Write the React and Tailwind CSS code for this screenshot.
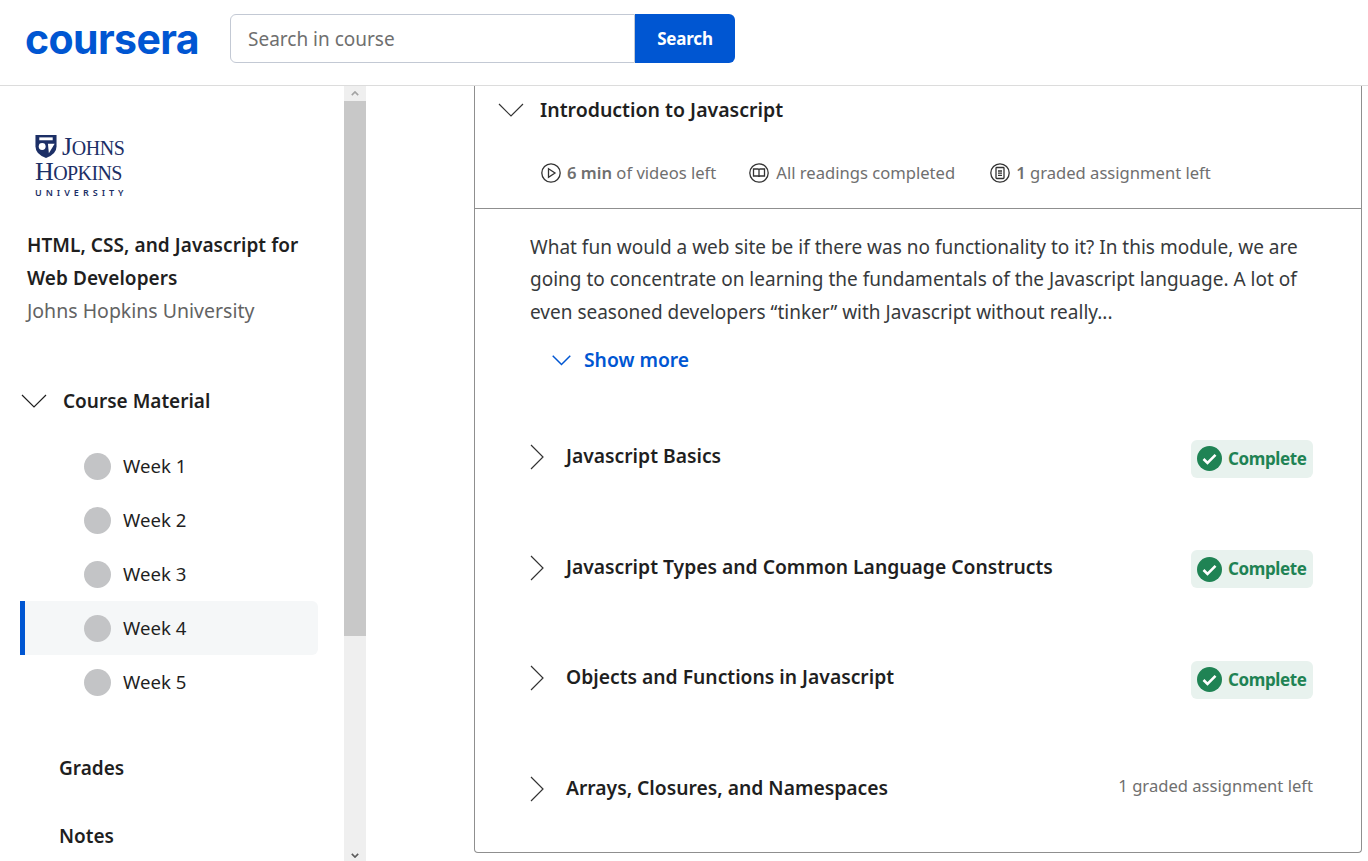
import React from 'react';

const font = { fontFamily: '"Noto Sans", sans-serif' };

const Chevron = ({ dir = 'down', className = '' }) => {
  const points = dir === 'down' ? '1,1 13,13 25,1' : '1,1 13,13 1,25';
  const box = dir === 'down' ? '0 0 26 15' : '0 0 15 26';
  return (
    <svg viewBox={box} className={className} fill="none" stroke="currentColor" strokeWidth="1.2">
      <polyline points={points} />
    </svg>
  );
};

const PlayIcon = () => (
  <svg viewBox="0 0 20 20" className="w-5 h-5 shrink-0" fill="none" stroke="#333" strokeWidth="1.3">
    <circle cx="10" cy="10" r="9.2" />
    <path d="M7.5 5.8 L14 10 L7.5 14.2 Z" />
  </svg>
);

const BookIcon = () => (
  <svg viewBox="0 0 20 20" className="w-5 h-5 shrink-0" fill="none" stroke="#333" strokeWidth="1.3">
    <circle cx="10" cy="10" r="9.2" />
    <path d="M4.5 6 H9 Q10 6 10 7 V14 Q10 13 9 13 H4.5 Z M15.5 6 H11 Q10 6 10 7 V14 Q10 13 11 13 H15.5 Z" />
  </svg>
);

const DocIcon = () => (
  <svg viewBox="0 0 20 20" className="w-5 h-5 shrink-0" fill="none" stroke="#333" strokeWidth="1.3">
    <circle cx="10" cy="10" r="9.2" />
    <rect x="6" y="4.5" width="8" height="11" rx="0.8" />
    <path d="M8 8 H12 M8 10.2 H12 M8 12.4 H12" />
  </svg>
);

const CheckBadge = () => (
  <div className="w-[122px] h-[38px] rounded-md bg-[#e8f2ee] flex items-center pl-[6px] gap-[6px]">
    <svg viewBox="0 0 25 25" className="w-[25px] h-[25px] shrink-0">
      <circle cx="12.5" cy="12.5" r="12.5" fill="#1f8354" />
      <path d="M6.5 13 L10.5 17 L18.5 8.8" fill="none" stroke="#fff" strokeWidth="2.6" />
    </svg>
    <span className="text-[17px] font-bold text-[#1f8354] tracking-[-0.4px]">Complete</span>
  </div>
);

const lessons = [
  { title: 'Javascript Basics', done: true },
  { title: 'Javascript Types and Common Language Constructs', done: true },
  { title: 'Objects and Functions in Javascript', done: true },
  { title: 'Arrays, Closures, and Namespaces', done: false },
];

const weeks = ['Week 1', 'Week 2', 'Week 3', 'Week 4', 'Week 5'];

const Sidebar = () => (
  <aside className="w-[344px] shrink-0 overflow-hidden">
    {/* JHU logo */}
    <div className="pl-[35px] pt-[48px] h-[140px]">
      <div className="w-[92px] text-[#1c2f66]" style={{ fontFamily: '"Liberation Serif", serif' }}>
        <div className="flex items-start h-[24px]">
          <svg viewBox="0 0 22 24" className="w-[22px] h-[23px] shrink-0 mt-[1px]">
            <path d="M0 0 H22 V12 Q22 20 11 24 Q0 20 0 12 Z" fill="#1c2f66" />
            <rect x="4" y="2.5" width="14" height="3" fill="#fff" />
            <circle cx="7" cy="12" r="3.6" fill="#fff" />
            <path d="M13 9 L20 9 L14 19 Z" fill="#fff" />
          </svg>
          <span className="text-[26px] leading-[26px] ml-[5px] tracking-[-0.4px] whitespace-nowrap">J<span className="text-[20px]">OHNS</span></span>
        </div>
        <div className="text-[26px] leading-[26px] mt-[1px] tracking-[-0.6px] whitespace-nowrap">H<span className="text-[20px]">OPKINS</span></div>
        <div className="text-[9px] leading-[10px] mt-[2px] font-semibold tracking-[4px] whitespace-nowrap" style={font}>UNIVERSITY</div>
      </div>
    </div>

    <div className="pl-[27px] text-[19px] leading-[32.5px] h-[161px] pt-[3px]">
      <div className="font-semibold text-[#1f1f1f] tracking-[0.07px]">HTML, CSS, and Javascript for</div>
      <div className="font-semibold text-[#1f1f1f] tracking-[0.07px]">Web Developers</div>
      <div className="text-[#636363] text-[19.5px] pt-[1px]">Johns Hopkins University</div>
    </div>

    {/* Course Material */}
    <div className="flex items-center h-[28px] pl-[21px] text-[#1f1f1f]">
      <Chevron className="w-[26px] h-[15px]" />
      <span className="ml-[16px] text-[19px] font-semibold">Course Material</span>
    </div>
    <div className="mt-[24px] w-[298px] ml-[20px]">
      {weeks.map((w) => (
        <div
          key={w}
          className={`h-[54px] flex items-center rounded-r-md border-l-[5px] ${w === 'Week 4' ? 'border-[#0056d2] bg-[#f5f7f8]' : 'border-transparent'}`}
        >
          <span className="w-[27px] h-[27px] rounded-full bg-[#c3c4c6] ml-[59px]" />
          <span className="ml-[12px] text-[18.6px] text-[#1f1f1f]">{w}</span>
        </div>
      ))}
    </div>
    <div className="pl-[59px] mt-[46px] text-[19px] font-semibold text-[#1f1f1f] leading-[26px]">Grades</div>
    <div className="pl-[59px] mt-[42px] text-[19px] font-semibold text-[#1f1f1f] leading-[26px]">Notes</div>
  </aside>
);

const Scrollbar = () => (
  <div className="w-[22px] shrink-0 bg-[#efefef] flex flex-col items-center">
    <div className="h-[15px] flex items-center">
      <svg viewBox="0 0 10 6" className="w-[8px] h-[5px]" fill="none" stroke="#a3a3a3" strokeWidth="2"><path d="M1 5 L5 1 L9 5" /></svg>
    </div>
    <div className="w-full h-[535px] bg-[#c8c8c8]" />
    <div className="mt-auto h-[10px] flex items-center mb-[1px]">
      <svg viewBox="0 0 10 6" className="w-[8px] h-[5px]" fill="none" stroke="#5c5c5c" strokeWidth="2"><path d="M1 1 L5 5 L9 1" /></svg>
    </div>
  </div>
);

const Main = () => (
  <main className="flex-1 min-w-0 overflow-hidden pl-[108px] pr-[6px]">
    <div className="h-[767px] border-x border-b border-[#8f8f8f] rounded-b-sm">
      {/* Module header */}
      <div className="h-[123px] border-b border-[#8f8f8f]">
        <div className="flex items-center pl-[23px] h-[48px]">
          <Chevron className="w-[26px] h-[15px] text-[#333]" />
          <span className="ml-[16px] text-[19.5px] font-semibold text-[#1f1f1f]">Introduction to Javascript</span>
        </div>
        <div className="flex items-center pl-[66px] mt-[27px] text-[16.6px] text-[#6f6f6f] h-[24px]">
          <PlayIcon />
          <span className="ml-[6px]"><b className="font-semibold">6 min</b> of videos left</span>
          <span className="ml-[33px]"><BookIcon /></span>
          <span className="ml-[7px]">All readings completed</span>
          <span className="ml-[35px]"><DocIcon /></span>
          <span className="ml-[6px]"><b className="font-semibold">1</b> graded assignment left</span>
        </div>
      </div>

      {/* Description */}
      <div className="pl-[55px] pt-[21.5px] text-[19px] leading-[32.5px] text-[#373a3c] whitespace-nowrap">
        <div>What fun would a web site be if there was no functionality to it? In this module, we are</div>
        <div>going to concentrate on learning the fundamentals of the Javascript language. A lot of</div>
        <div>even seasoned developers “tinker” with Javascript without really...</div>
      </div>
      <div className="flex items-center pl-[77px] mt-[16px] h-[32px] text-[#0056d2]">
        <Chevron className="w-[19px] h-[11px] stroke-[2px]" />
        <span className="ml-[13px] text-[19.3px] font-semibold">Show more</span>
      </div>

      {/* Lessons */}
      <div className="mt-[67.5px] pl-[55px] pr-[48px]">
        {lessons.map((l) => (
          <div key={l.title} className="h-[110.5px] flex items-start justify-between">
            <div className="flex items-center h-[26px]">
              <Chevron dir="right" className="w-[15px] h-[26px] text-[#333] shrink-0 mt-[1px]" />
              <span className="ml-[21px] text-[19.3px] font-semibold text-[#1f1f1f]">{l.title}</span>
            </div>
            {l.done ? (
              <div className="-mt-[4px]"><CheckBadge /></div>
            ) : (
              <span className="text-[16.6px] text-[#6f6f6f] leading-[24px] -mt-[1px]">1 graded assignment left</span>
            )}
          </div>
        ))}
      </div>
    </div>
  </main>
);

export default function App() {
  return (
    <div className="h-[861px] w-[1368px] overflow-hidden bg-white flex flex-col" style={font}>
      <header className="h-[86px] shrink-0 border-b border-[#dcdcdc] flex items-start pl-[25px]">
        <span className="w-[205px] mt-[14px] text-[#0056d2] text-[41px] leading-[50px] font-bold tracking-[-0.6px]" style={{ fontFamily: 'Inter, sans-serif' }}>coursera</span>
        <div className="flex mt-[14px] h-[49px]">
          <div className="w-[405px] border border-[#c3c9d4] rounded-l-md flex items-center pl-[17px] pt-[1px] text-[19px] text-[#6f6f6f]">Search in course</div>
          <button className="w-[100px] bg-[#0056d2] text-white rounded-r-md text-[17px] font-bold tracking-[-0.2px]">Search</button>
        </div>
      </header>
      <div className="flex flex-1 min-h-0">
        <Sidebar />
        <Scrollbar />
        <Main />
      </div>
    </div>
  );
}
